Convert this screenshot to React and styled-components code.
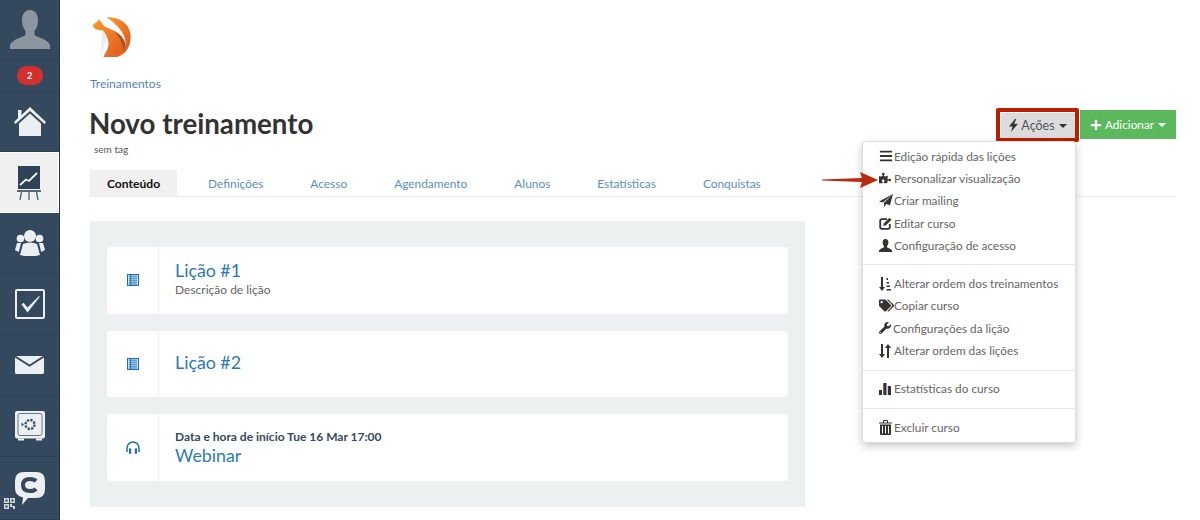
import React from 'react';
import styled, { createGlobalStyle } from 'styled-components';
import { FaBars, FaPuzzlePiece, FaTags, FaWrench, FaPlus } from 'react-icons/fa';

const GlobalStyle = createGlobalStyle`
  html, body {
    margin: 0;
    height: 520px;
    overflow: hidden;
    background: #fff;
    font-family: 'Lato', 'Open Sans', sans-serif;
  }
`;

const MENU = [
  [
    { label: 'Edição rápida das lições', icon: <FaBars size={14} />, gap: 1 },
    { label: 'Personalizar visualização', icon: <FaPuzzlePiece size={12} />, gap: 3 },
    { label: 'Criar mailing', icon: <SendIcon />, gap: 1 },
    { label: 'Editar curso', icon: <EditIcon />, gap: 2 },
    { label: 'Configuração de acesso', icon: <UserIcon />, gap: 2 },
  ],
  [
    { label: 'Alterar ordem dos treinamentos', icon: <SortListIcon />, gap: 3 },
    { label: 'Copiar curso', icon: <FaTags size={15} />, gap: 0 },
    { label: 'Configurações da lição', icon: <FaWrench size={12} />, gap: 2 },
    { label: 'Alterar ordem das lições', icon: <SwapIcon />, gap: 3 },
  ],
  [{ label: 'Estatísticas do curso', icon: <BarsIcon />, gap: 3 }],
  [{ label: 'Excluir curso', icon: <TrashIcon />, gap: 2 }],
];

const TABS = ['Conteúdo', 'Definições', 'Acesso', 'Agendamento', 'Alunos', 'Estatísticas', 'Conquistas'];

function BoltIcon() {
  return (
    <svg width="9" height="13" viewBox="0 0 9 13" fill="#333">
      <path d="M6 0 L0 7.4 H3.6 L2 13 L9 4.8 H5 L7.4 0 Z" />
    </svg>
  );
}

function SendIcon() {
  return (
    <svg width="14" height="13" viewBox="0 0 14 13" fill="#333">
      <path d="M14 0 L0 7.4 L3.8 8.6 Z M14 0 L5 8.8 L5 13 L7.2 10 L11 11.2 Z" />
    </svg>
  );
}

function EditIcon() {
  return (
    <svg width="13" height="13" viewBox="0 0 13 13" fill="none" stroke="#333">
      <path d="M8 2.2 H3 Q1.2 2.2 1.2 4 V10 Q1.2 11.8 3 11.8 H9 Q10.8 11.8 10.8 10 V7" strokeWidth="1.8" />
      <path d="M4.6 8.6 L5 6.4 L10.4 1 L12.2 2.8 L6.8 8.2 Z" fill="#333" strokeWidth="0.4" />
    </svg>
  );
}

function UserIcon() {
  return (
    <svg width="13" height="13" viewBox="0 0 13 13" fill="#333">
      <path d="M6.5 0 C8.6 0 9.4 1.8 9.4 3.6 C9.4 5.2 8.7 6.4 8 7.2 V8.2 C9 9 12.4 9.6 13 11.6 V13 H0 V11.6 C0.6 9.6 4 9 5 8.2 V7.2 C4.3 6.4 3.6 5.2 3.6 3.6 C3.6 1.8 4.4 0 6.5 0 Z" />
    </svg>
  );
}

function SortListIcon() {
  return (
    <svg width="12" height="14" viewBox="0 0 12 14" fill="#333">
      <path d="M2 0 H4 V10 H6 L3 14 L0 10 H2 Z" />
      <path d="M7.5 1 H9 V3 H7.5 Z M7.5 5 H10 V6.5 H7.5 Z M7.5 8.5 H11 V10 H7.5 Z M7.5 12 H12 V13.5 H7.5 Z" />
    </svg>
  );
}

function SwapIcon() {
  return (
    <svg width="12" height="14" viewBox="0 0 12 14" fill="#333">
      <path d="M2 0 H4 V10 H6 L3 14 L0 10 H2 Z" />
      <path d="M8 14 H10 V4 H12 L9 0 L6 4 H8 Z" />
    </svg>
  );
}

function BarsIcon() {
  return (
    <svg width="12" height="12" viewBox="0 0 12 12" fill="#333">
      <rect x="0" y="7" width="3" height="5" />
      <rect x="4.3" y="0" width="3.2" height="12" />
      <rect x="8.8" y="3" width="3.2" height="9" />
    </svg>
  );
}

function TrashIcon() {
  return (
    <svg width="13" height="15" viewBox="0 0 13 15" fill="#333">
      <path d="M0 2.4 H4 V1 Q4 0 5 0 H8 Q9 0 9 1 V2.4 H13 V3.6 H0 Z M5 1 V2.4 H8 V1 Z" fillRule="evenodd" />
      <path d="M1 4.5 H12 V14 Q12 15 11 15 H2 Q1 15 1 14 Z M3 6 V13.6 H4 V6 Z M6 6 V13.6 H7 V6 Z M9 6 V13.6 H10 V6 Z" fillRule="evenodd" />
    </svg>
  );
}

function LessonIcon() {
  return (
    <svg width="12" height="12" viewBox="0 0 12 12">
      <rect width="12" height="12" fill="#1b6fb5" />
      <rect x="1" y="1" width="10" height="10" fill="#cfe2f2" />
      <path d="M2 2.2 H10 M2 4.2 H10 M2 6.2 H10 M2 8.2 H10 M2 10 H10" stroke="#1b6fb5" strokeWidth="0.9" />
      <path d="M3.6 1 V11" stroke="#1b6fb5" strokeWidth="0.9" />
    </svg>
  );
}

function HeadphonesIcon() {
  return (
    <svg width="14" height="13" viewBox="0 0 14 13" fill="none">
      <path d="M1 11 V7 A6 6 0 0 1 13 7 V11" stroke="#1b6fb5" strokeWidth="1.5" />
      <rect x="3" y="7.4" width="2.2" height="5.4" fill="#1b6fb5" />
      <rect x="8.8" y="7.4" width="2.2" height="5.4" fill="#1b6fb5" />
    </svg>
  );
}

function Logo() {
  return (
    <svg width="42" height="43" viewBox="0 0 42 43">
      <defs>
        <linearGradient id="fox" x1="0" y1="0" x2="1" y2="0.7">
          <stop offset="0" stopColor="#fa9d2a" />
          <stop offset="0.55" stopColor="#f07a27" />
          <stop offset="1" stopColor="#e0611f" />
        </linearGradient>
      </defs>
      <path d="M14 30 C18 24 16 18 12 14 L11 41 Z" fill="#ececec" />
      <path d="M2.7 10 C4 7 7.5 6.5 9 3.3 C11 6 13 9 15 10.7 C20 13 24 14 28 17 C32 20 34 24 35 28 C36 33 32 39 27 41 L13.3 41 C16 36 19 32 18.5 27 C18 22 16 18 13 14.5 C10 14 5 14.5 2.7 10 Z" fill="url(#fox)" />
      <path d="M16.7 1.3 C25 0.6 34 4 38 11 C42 18 41.5 27 37 34 C34 38 30 40.5 26.7 41 C32 38 36 33 35.5 26 C35 17 26 7.5 16.7 1.3 Z" fill="url(#fox)" />
      <path d="M25 16.5 C30 18 34 22 35.4 27.5 C35.8 31 35 34 33.5 36 C33.5 29 30.5 22 25 16.5 Z" fill="#a9532a" />
    </svg>
  );
}

const NAV_ICONS = {
  home: (
    <svg width="32" height="30" viewBox="0 0 32 30" fill="#eceff1">
      <path d="M16 0 L32 15 L30.5 17 L16 4 L1.5 17 L0 15 L4 11 V3 H7.5 V8 Z" />
      <path d="M16 6.5 L27 16.5 V29 H5 V16.5 Z" />
    </svg>
  ),
  chart: (
    <svg width="24" height="34" viewBox="0 0 24 34">
      <rect x="1" y="0" width="22" height="23" fill="#2f4356" />
      <path d="M3 19 L9 13.5 L12 15 L20 7" fill="none" stroke="#f2f4f5" strokeWidth="1.8" />
      <rect x="0" y="24" width="24" height="2" fill="#58697a" />
      <path d="M4.5 26 L3 34 M12 26 V34 M19.5 26 L21 34" stroke="#58697a" strokeWidth="1.4" />
    </svg>
  ),
  users: (
    <svg width="30" height="26" viewBox="0 0 30 26" fill="#eceff1">
      <circle cx="15" cy="6" r="6" />
      <circle cx="5.5" cy="8.5" r="3.8" />
      <circle cx="24.5" cy="8.5" r="3.8" />
      <path d="M8 14 Q15 11 22 14 L25 25 Q15 28 5 25 Z" />
      <path d="M0 20 L2 13 L6 13 L3.8 22 Z M30 20 L28 13 L24 13 L26.2 22 Z" />
    </svg>
  ),
  check: (
    <svg width="30" height="30" viewBox="0 0 30 30" fill="none">
      <rect x="1" y="1" width="28" height="28" rx="1" stroke="#eceff1" strokeWidth="2" />
      <path d="M6.5 15.5 L8.5 13.8 L12.5 18.5 L24 7 L24.8 7.8 L12.6 23.5 Z" fill="#eceff1" />
    </svg>
  ),
  mail: (
    <svg width="29" height="18" viewBox="0 0 29 18" fill="#eceff1">
      <path d="M1 0 H28 L14.5 8.4 Z" />
      <path d="M0 1.5 L14.5 10.8 L29 1.5 V16.5 Q29 18 27.5 18 H1.5 Q0 18 0 16.5 Z" />
    </svg>
  ),
  safe: (
    <svg width="30" height="30" viewBox="0 0 30 30">
      <rect x="0" y="0" width="30" height="27.5" rx="2" fill="#eceff1" />
      <rect x="3" y="2.5" width="24" height="22" rx="2" fill="none" stroke="#667788" strokeWidth="1" />
      <circle cx="15" cy="13.5" r="4.5" fill="none" stroke="#3a5064" strokeWidth="2.4" strokeDasharray="2.3 1.2" />
      <path d="M6.5 11.5 L9 13.5 L6.5 15.5 Z" fill="#3a5064" />
      <rect x="3" y="27.5" width="6" height="2" fill="#eceff1" />
      <rect x="21" y="27.5" width="6" height="2" fill="#eceff1" />
    </svg>
  ),
};

function ChatLogo() {
  return (
    <svg width="30" height="33" viewBox="0 0 30 33">
      <path d="M9 0 H21 Q30 0 30 9 V17 Q30 26 21 26 H13 L7 33 L8 25.4 Q0 24 0 16 V9 Q0 0 9 0 Z" fill="#eceff1" />
      <path d="M21 9.2 Q19 7 15 7 Q8 7 8 13 Q8 19 15 19 Q19 19 21 16.8" fill="none" stroke="#34495e" strokeWidth="4" />
    </svg>
  );
}

export default function App() {
  return (
    <Page>
      <GlobalStyle />
      <Sidebar>
        <NavItem $height={60}>
          <svg width="40" height="39" viewBox="0 0 40 39" fill="#8c96a1">
            <path d="M20 0 C26 0 28 5 28 11 C28 16 26 19 24.5 21 V25 C26 27 38 29 40 35 V39 H0 V35 C2 29 14 27 15.5 25 V21 C14 19 12 16 12 11 C12 5 14 0 20 0 Z" />
          </svg>
        </NavItem>
        <NavItem $height={32}>
          <Badge>2</Badge>
        </NavItem>
        <NavItem $height={60}>{NAV_ICONS.home}</NavItem>
        <NavItem $height={61} $active>{NAV_ICONS.chart}</NavItem>
        <NavItem $height={61}>{NAV_ICONS.users}</NavItem>
        <NavItem $height={61}>{NAV_ICONS.check}</NavItem>
        <NavItem $height={61}>{NAV_ICONS.mail}</NavItem>
        <NavItem $height={61}>{NAV_ICONS.safe}</NavItem>
        <NavItem $height={63}>
          <ChatLogo />
          <QrMark>
            <svg width="11" height="11" viewBox="0 0 11 11" fill="#cfd6dc">
              <path d="M0 0 H5 V5 H0 Z M1.5 1.5 V3.5 H3.5 V1.5 Z M6 0 H11 V5 H6 Z M7.5 1.5 V3.5 H9.5 V1.5 Z M0 6 H5 V11 H0 Z M1.5 7.5 V9.5 H3.5 V7.5 Z M6 6 H8 V8 H11 V11 H9 V9 H6 Z" fillRule="evenodd" />
            </svg>
          </QrMark>
        </NavItem>
      </Sidebar>

      <Main>
        <LogoRow>
          <Logo />
        </LogoRow>
        <Breadcrumb>Treinamentos</Breadcrumb>
        <HeaderRow>
          <div>
            <Title>Novo treinamento</Title>
            <TagNote>sem tag</TagNote>
          </div>
          <Actions>
            <ActionsWrap>
              <ActionsButton>
                <BoltIcon /> Ações <Caret />
              </ActionsButton>
              <Highlight />
              <Dropdown>
                {MENU.map((group, i) => (
                  <MenuGroup key={i} $first={i === 0}>
                    {group.map((item) => (
                      <MenuItem key={item.label} $gap={item.gap}>
                        {item.icon}
                        <span>{item.label}</span>
                      </MenuItem>
                    ))}
                  </MenuGroup>
                ))}
                <ArrowMark>
                  <svg width="56" height="16" viewBox="0 0 56 16" fill="#b92a0c">
                    <path d="M0 7.4 L40 6 L38 0 L56 8 L38 16 L40 10 L0 8.6 Z" />
                  </svg>
                </ArrowMark>
              </Dropdown>
            </ActionsWrap>
            <AddButton>
              <FaPlus size={12} /> Adicionar <Caret $light />
            </AddButton>
          </Actions>
        </HeaderRow>
        <TabBar>
          {TABS.map((tab, i) => (
            <Tab key={tab} $active={i === 0}>{tab}</Tab>
          ))}
        </TabBar>
        <Panel>
          <Card>
            <CardIcon><LessonIcon /></CardIcon>
            <CardBody $lift={3}>
              <CardTitle>Lição #1</CardTitle>
              <CardDescription>Descrição de lição</CardDescription>
            </CardBody>
          </Card>
          <Card>
            <CardIcon><LessonIcon /></CardIcon>
            <CardBody $lift={5}>
              <CardTitle>Lição #2</CardTitle>
            </CardBody>
          </Card>
          <Card>
            <CardIcon><HeadphonesIcon /></CardIcon>
            <CardBody $drop={1}>
              <CardDate>Data e hora de início Tue 16 Mar 17:00</CardDate>
              <CardTitle>Webinar</CardTitle>
            </CardBody>
          </Card>
        </Panel>
      </Main>
    </Page>
  );
}

const Page = styled.div`
  display: flex;
  width: 1200px;
  height: 520px;
  overflow: hidden;
`;

const Sidebar = styled.nav`
  flex: 0 0 60px;
  box-sizing: border-box;
  height: 520px;
  background: #34495e;
  border-right: 1px solid #26374a;
  display: flex;
  flex-direction: column;
`;

const NavItem = styled.div`
  position: relative;
  flex: 0 0 ${(p) => p.$height}px;
  box-sizing: border-box;
  display: flex;
  align-items: center;
  justify-content: center;
  background: ${(p) => (p.$active ? '#f0f0f0' : 'transparent')};
  border-bottom: 1px solid ${(p) => (p.$active ? '#fff' : '#2c3f53')};
  ${(p) => p.$active && 'border-top: 1px solid #fff; border-right: 1px solid #fff;'}
`;

const Badge = styled.span`
  width: 26px;
  height: 19px;
  border-radius: 10px;
  background: #d32f2f;
  color: #fff;
  font-size: 9px;
  font-weight: 700;
  display: flex;
  align-items: center;
  justify-content: center;
`;

const QrMark = styled.span`
  position: absolute;
  left: 4px;
  bottom: 10px;
  display: flex;
`;

const Main = styled.main`
  flex: 1;
  min-width: 0;
  box-sizing: border-box;
  padding: 16px 24px 0 30px;
`;

const LogoRow = styled.div`
  height: 43px;
`;

const Breadcrumb = styled.div`
  margin-top: 18px;
  height: 14px;
  line-height: 14px;
  font-size: 12px;
  color: #4f86b8;
`;

const HeaderRow = styled.div`
  display: flex;
  justify-content: space-between;
  align-items: flex-start;
  height: 68px;
  margin-top: 11px;
`;

const Title = styled.h1`
  margin: 7px 0 0 -1px;
  font-size: 27.7px;
  line-height: 30px;
  font-weight: 700;
  color: #333;
`;

const TagNote = styled.div`
  margin: 4px 0 0 4px;
  font-size: 10px;
  line-height: 12px;
  color: #555;
`;

const Actions = styled.div`
  display: flex;
  align-items: flex-start;
  gap: 5px;
  margin-top: 7px;
`;

const ActionsWrap = styled.div`
  position: relative;
  margin-top: 4px;
`;

const ActionsButton = styled.div`
  display: flex;
  align-items: center;
  justify-content: center;
  gap: 3px;
  width: 74px;
  height: 25px;
  background: #dcdcdc;
  color: #555;
  font-size: 12.5px;
`;

const Highlight = styled.div`
  position: absolute;
  top: -5px;
  left: -5px;
  right: -4px;
  bottom: -4px;
  border: 4px solid #b81f00;
  border-radius: 2px;
`;

const Caret = styled.i`
  display: inline-block;
  margin-left: 1px;
  border-top: 4px solid ${(p) => (p.$light ? '#fff' : '#333')};
  border-left: 4px solid transparent;
  border-right: 4px solid transparent;
`;

const AddButton = styled.div`
  display: flex;
  align-items: center;
  justify-content: center;
  gap: 3px;
  width: 96px;
  height: 29px;
  margin-top: 1px;
  background: #5cb85c;
  color: #fff;
  font-size: 11.8px;
`;

const Dropdown = styled.div`
  position: absolute;
  z-index: 3;
  top: 28px;
  right: -1px;
  box-sizing: border-box;
  width: 214px;
  height: 302px;
  padding: 3px 0;
  background: #fff;
  border: 1px solid #ddd;
  border-radius: 3px;
  box-shadow: 0 3px 8px rgba(0, 0, 0, 0.22);
`;

const MenuGroup = styled.div`
  ${(p) => !p.$first && 'border-top: 1px solid #e8e8e8; margin-top: 8px; padding-top: 7px;'}
`;

const MenuItem = styled.div`
  display: flex;
  align-items: center;
  gap: ${(p) => p.$gap}px;
  height: 22.3px;
  padding-left: 16px;
  font-size: 11.8px;
  color: #666;
  white-space: nowrap;
  svg { flex: none; color: #333; }
`;

const ArrowMark = styled.div`
  position: absolute;
  top: 30px;
  left: -41px;
  display: flex;
`;

const TabBar = styled.div`
  display: flex;
  height: 26px;
  border-bottom: 1px solid #eee;
`;

const Tab = styled.div`
  display: flex;
  align-items: center;
  height: 26px;
  padding: 0 ${(p) => (p.$active ? '17px' : '23.5px')};
  margin-right: ${(p) => (p.$active ? '7.5px' : '0')};
  background: ${(p) => (p.$active ? '#f0f0f0' : 'transparent')};
  color: ${(p) => (p.$active ? '#111' : '#5a8fbf')};
  font-weight: ${(p) => (p.$active ? 700 : 400)};
  font-size: ${(p) => (p.$active ? '12.1px' : '11.9px')};
`;

const Panel = styled.section`
  box-sizing: border-box;
  width: 715px;
  height: 286px;
  margin-top: 24px;
  padding: 26px 17px;
  background: #ecf0f1;
  display: flex;
  flex-direction: column;
  gap: 17.2px;
`;

const Card = styled.article`
  display: flex;
  height: 66.6px;
  background: #fff;
  border-radius: 4px;
`;

const CardIcon = styled.div`
  flex: 0 0 51px;
  display: flex;
  align-items: center;
  justify-content: center;
  border-right: 1px solid #ecf0f1;
`;

const CardBody = styled.div`
  flex: 1;
  box-sizing: border-box;
  display: flex;
  flex-direction: column;
  justify-content: center;
  padding: ${(p) => p.$drop || 0}px 0 ${(p) => p.$lift || 0}px 16px;
`;

const CardTitle = styled.div`
  font-size: 17.8px;
  line-height: 22px;
  color: #2a7ab8;
`;

const CardDescription = styled.div`
  margin-top: 1px;
  font-size: 12px;
  line-height: 16px;
  color: #666;
`;

const CardDate = styled.div`
  font-size: 12px;
  line-height: 14px;
  font-weight: 700;
  color: #34495e;
`;
